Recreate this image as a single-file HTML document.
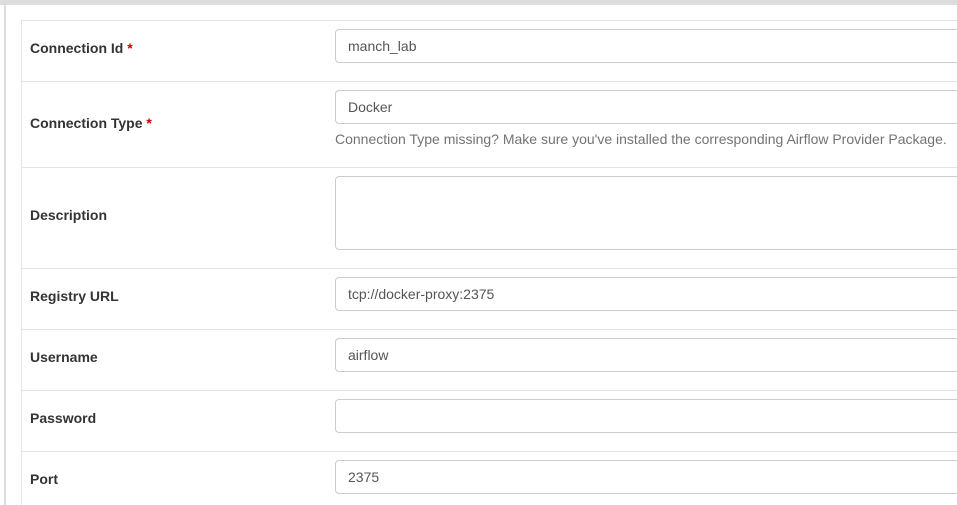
<!DOCTYPE html>
<html><head><style>
body{margin:0;width:957px;height:505px;overflow:hidden;background:#fff;font-family:"Liberation Sans",sans-serif;font-size:14px;color:#333;position:relative}
.top{position:absolute;left:0;top:0;width:957px;height:5px;background:#ddd}
.lb{position:absolute;left:4px;top:5px;width:2px;height:500px;background:#ddd}
.tb{position:absolute;left:21px;top:20px;width:940px;border-top:1px solid #e5e5e5;border-left:1px solid #e5e5e5}
.row{position:absolute;left:21px;width:940px;border-top:1px solid #e5e5e5}
.lab{position:absolute;left:30px;font-weight:bold;color:#333}
.lab b{color:#c00}
.in{position:absolute;left:335px;width:640px;height:32px;border:1px solid #ccc;border-radius:4px;box-sizing:border-box;height:34px;padding-left:12px;line-height:32px;color:#555}
.help{position:absolute;left:335px;top:131px;color:#737373}
</style></head><body>
<div class="top"></div><div class="lb"></div>
<div style="position:absolute;left:21px;top:20px;width:1px;height:485px;background:#e5e5e5"></div>
<div class="row" style="top:20px"></div>
<div class="row" style="top:81px"></div>
<div class="row" style="top:167px"></div>
<div class="row" style="top:268px"></div>
<div class="row" style="top:329px"></div>
<div class="row" style="top:390px"></div>
<div class="row" style="top:451px"></div>

<div class="lab" style="top:40px">Connection Id <b>*</b></div>
<div class="in" style="top:29px">manch_lab</div>
<div class="lab" style="top:115px">Connection Type <b>*</b></div>
<div class="in" style="top:90px">Docker</div>
<div class="help">Connection Type missing? Make sure you've installed the corresponding Airflow Provider Package.</div>
<div class="lab" style="top:207px">Description</div>
<div class="in" style="top:176px;height:74px"></div>
<div class="lab" style="top:288px">Registry URL</div>
<div class="in" style="top:277px">tcp://docker-proxy:2375</div>
<div class="lab" style="top:349px">Username</div>
<div class="in" style="top:338px">airflow</div>
<div class="lab" style="top:410px">Password</div>
<div class="in" style="top:399px"></div>
<div class="lab" style="top:471px">Port</div>
<div class="in" style="top:460px">2375</div>
</body></html>
